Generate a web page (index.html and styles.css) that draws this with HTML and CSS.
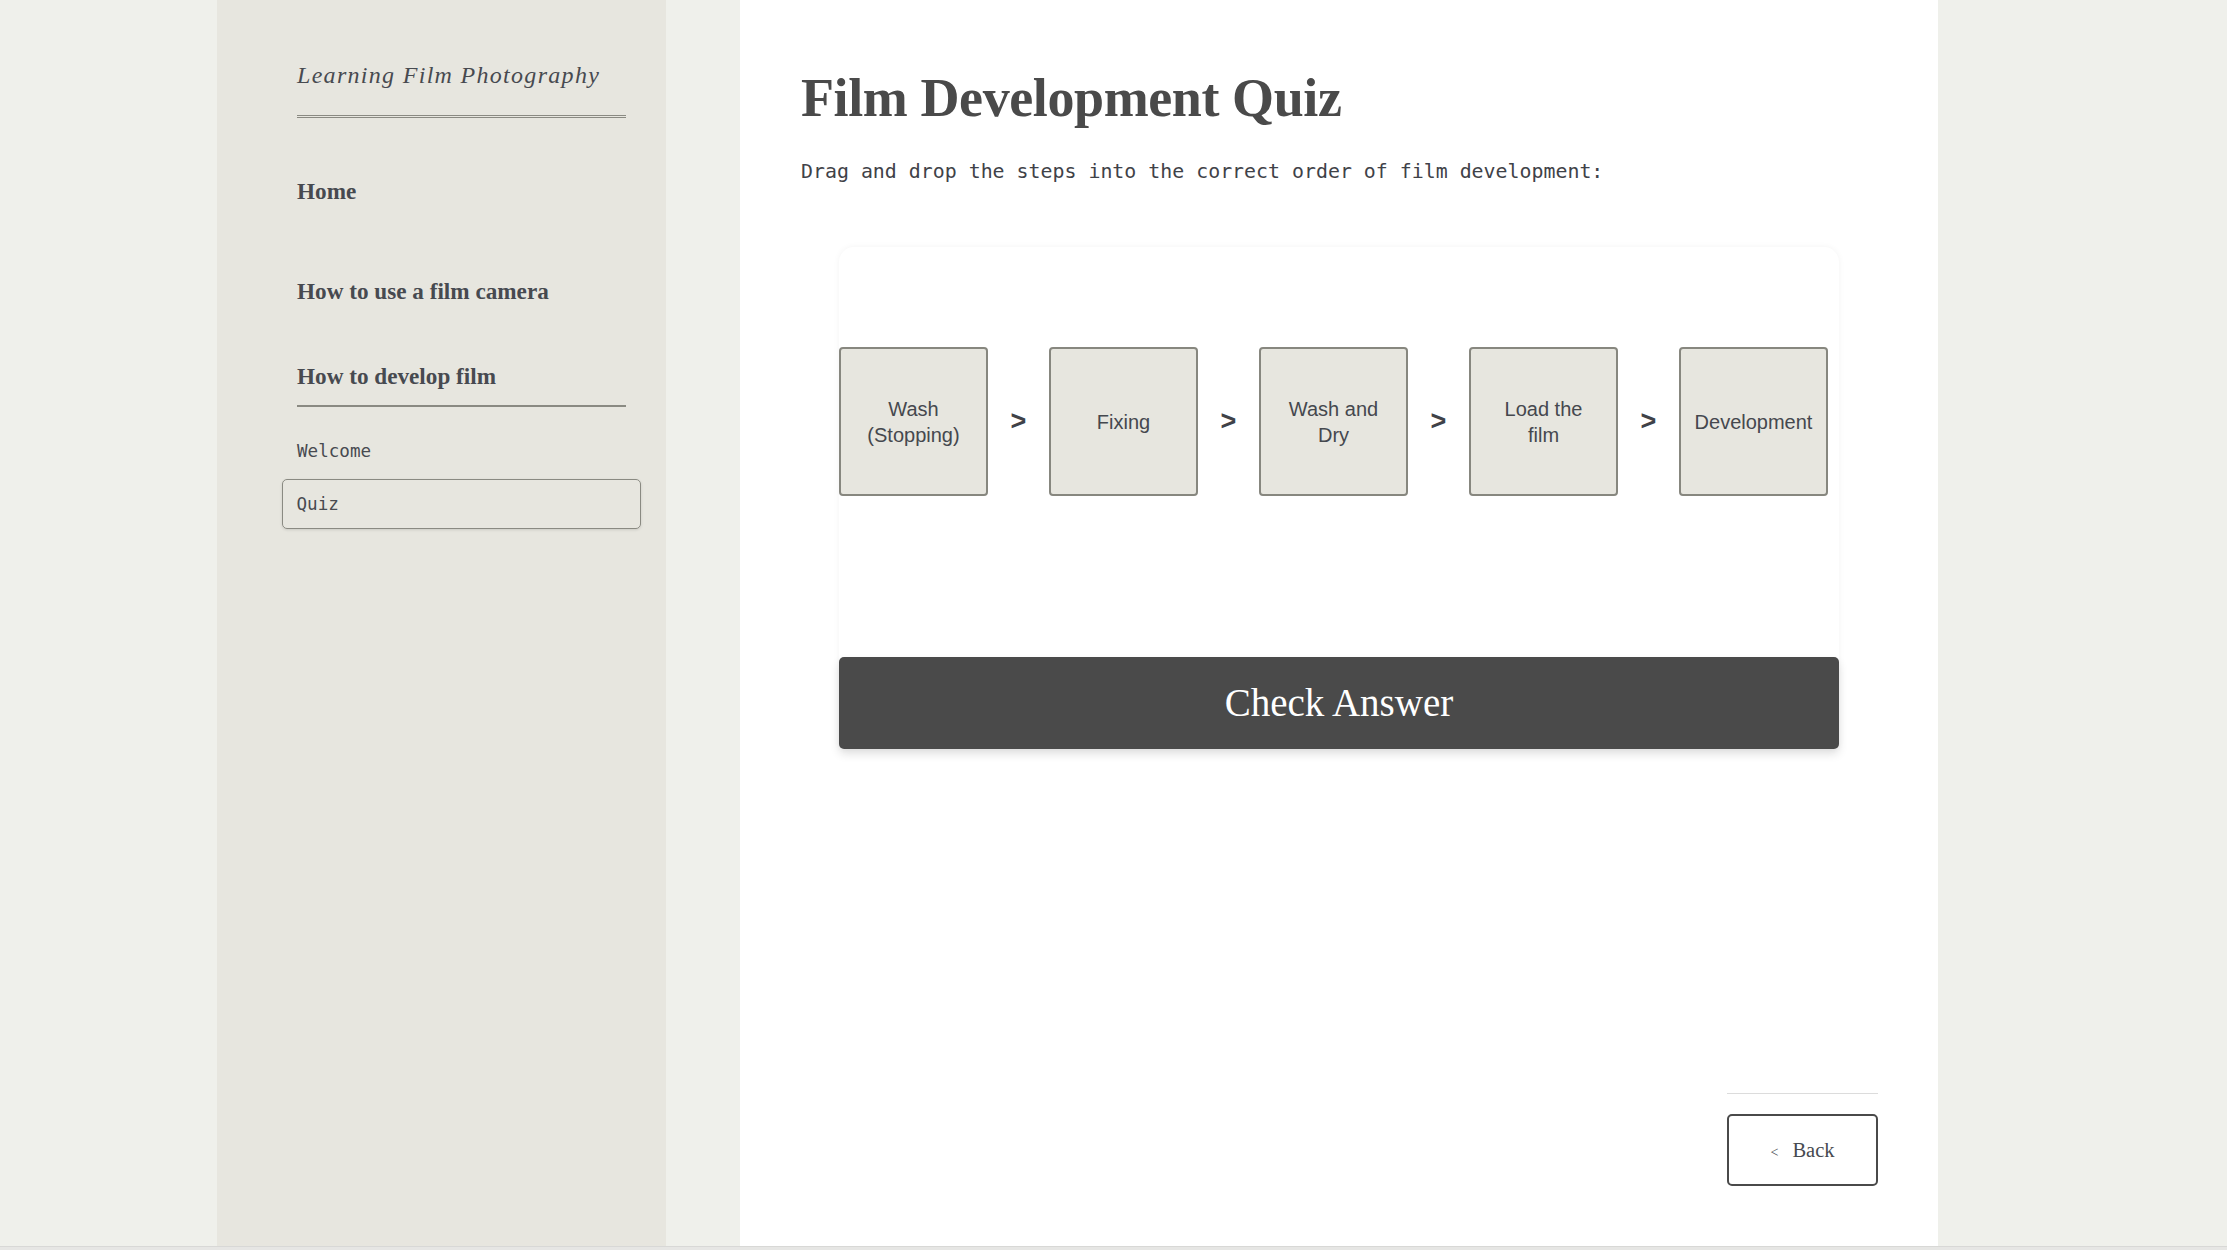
FILE: index.html
```html
<!DOCTYPE html>
<html lang="en">
<head>
<meta charset="utf-8">
<title>Film Development Quiz</title>
<link rel="stylesheet" href="styles.css">
</head>
<body>
<div class="page">
  <aside class="sidebar">
    <div class="logo">Learning Film Photography</div>
    <nav class="nav">
      <a class="nav-item nav-home" href="#">Home</a>
      <a class="nav-item nav-camera" href="#">How to use a film camera</a>
      <a class="nav-item nav-develop" href="#">How to develop film</a>
      <a class="sub-item sub-welcome" href="#">Welcome</a>
      <a class="sub-item sub-active" href="#">Quiz</a>
    </nav>
  </aside>
  <main class="main">
    <h1 class="title">Film Development Quiz</h1>
    <p class="intro">Drag and drop the steps into the correct order of film development:</p>
    <section class="card">
      <div class="zone">
        <div class="steps">
          <div class="step">Wash<br>(Stopping)</div>
          <div class="arrow">&gt;</div>
          <div class="step">Fixing</div>
          <div class="arrow">&gt;</div>
          <div class="step">Wash and<br>Dry</div>
          <div class="arrow">&gt;</div>
          <div class="step">Load the<br>film</div>
          <div class="arrow">&gt;</div>
          <div class="step">Development</div>
        </div>
      </div>
      <button class="check">Check Answer</button>
    </section>
    <div class="footer">
      <div class="footer-rule"></div>
      <button class="back"><span class="back-arrow">&lt;</span><span>Back</span></button>
    </div>
  </main>
</div>
</body>
</html>
```

FILE: styles.css
```css
html {
  background: #e6e6e4;
}
body {
  margin: 0;
  font-family: "Liberation Serif", serif;
  color: #4a4a4a;
}
.page {
  height: 1247px;
  display: flex;
  background: #eff0eb;
  padding-left: 217px;
  box-sizing: border-box;
  border-bottom: 1px solid #d8d8d6;
}
.sidebar {
  width: 449px;
  flex: none;
  background: #e7e6df;
  box-sizing: border-box;
  padding: 60px 40px 0 80px;
}
.logo {
  font-family: "Liberation Serif", serif;
  font-style: italic;
  font-size: 24px;
  line-height: 30px;
  letter-spacing: 1.3px;
  color: #474a50;
  padding-bottom: 25px;
  border-bottom: 3px double #8a8a82;
}
.nav {
  display: flex;
  flex-direction: column;
}
.nav-item {
  font-family: "Liberation Serif", serif;
  font-weight: bold;
  font-size: 23.2px;
  line-height: 30px;
  color: #474a50;
  text-decoration: none;
}
.nav-home {
  margin-top: 58px;
}
.nav-camera {
  margin-top: 70px;
}
.nav-develop {
  margin-top: 55px;
  padding-bottom: 14px;
  border-bottom: 2px solid #8a8a82;
}
.sub-item {
  font-family: "DejaVu Sans Mono", monospace;
  font-size: 17.6px;
  line-height: 24px;
  color: #474a50;
  text-decoration: none;
}
.sub-welcome {
  margin-top: 32px;
}
.sub-active {
  margin: 16px -15px 0;
  height: 50px;
  box-sizing: border-box;
  border: 1.5px solid #8a8a82;
  border-radius: 5px;
  padding: 12px 13.5px;
  box-shadow: 0 1px 3px rgba(0, 0, 0, 0.12);
}
.main {
  width: 1198px;
  flex: none;
  margin-left: 74px;
  background: #ffffff;
  box-sizing: border-box;
  padding: 65px 60px 60px 61px;
  display: flex;
  flex-direction: column;
}
.title {
  margin: 0;
  font-family: "Liberation Serif", serif;
  font-weight: bold;
  font-size: 54px;
  line-height: 66px;
  letter-spacing: -0.4px;
  color: #4a4a4a;
}
.intro {
  margin: 27px 0 0;
  font-family: "DejaVu Sans Mono", monospace;
  font-size: 19.9px;
  line-height: 28px;
  color: #3f4248;
}
.card {
  width: 1000px;
  margin: 61px 0 0 38px;
  background: #ffffff;
  border-radius: 15px 15px 6px 6px;
  box-shadow: 0 0 6px rgba(0, 0, 0, 0.05);
}
.zone {
  height: 410px;
  box-sizing: border-box;
  padding-top: 100px;
}
.steps {
  display: flex;
  align-items: center;
}
.step {
  width: 149px;
  height: 149px;
  box-sizing: border-box;
  flex: none;
  background: #e7e6df;
  border: 2px solid #87877f;
  border-radius: 4px;
  display: flex;
  align-items: center;
  justify-content: center;
  text-align: center;
  font-family: "Liberation Sans", Arial, sans-serif;
  font-size: 20px;
  line-height: 26px;
  color: #45484e;
}
.arrow {
  width: 61px;
  flex: none;
  text-align: center;
  font-family: "Liberation Sans", Arial, sans-serif;
  font-weight: bold;
  font-size: 27px;
  color: #3f4248;
}
.check {
  display: flex;
  align-items: center;
  justify-content: center;
  width: 100%;
  height: 92px;
  border: none;
  border-radius: 5px;
  background: #4a4a4a;
  color: #ffffff;
  font-family: "Liberation Serif", serif;
  font-size: 39px;
  line-height: 46px;
  box-shadow: 0 5px 10px rgba(0, 0, 0, 0.12);
  padding: 0;
}
.footer {
  margin-top: auto;
  align-self: flex-end;
  width: 151px;
}
.footer-rule {
  height: 1px;
  background: #dcdcdc;
  margin-bottom: 20px;
}
.back {
  width: 151px;
  height: 72px;
  box-sizing: border-box;
  border: 2px solid #4a4a4a;
  border-radius: 5px;
  background: #ffffff;
  display: flex;
  align-items: center;
  justify-content: center;
  gap: 14px;
  font-family: "Liberation Serif", serif;
  font-size: 20.5px;
  color: #474a50;
  padding: 0;
}
.back-arrow {
  font-size: 14px;
  margin-top: 6px;
}
```
